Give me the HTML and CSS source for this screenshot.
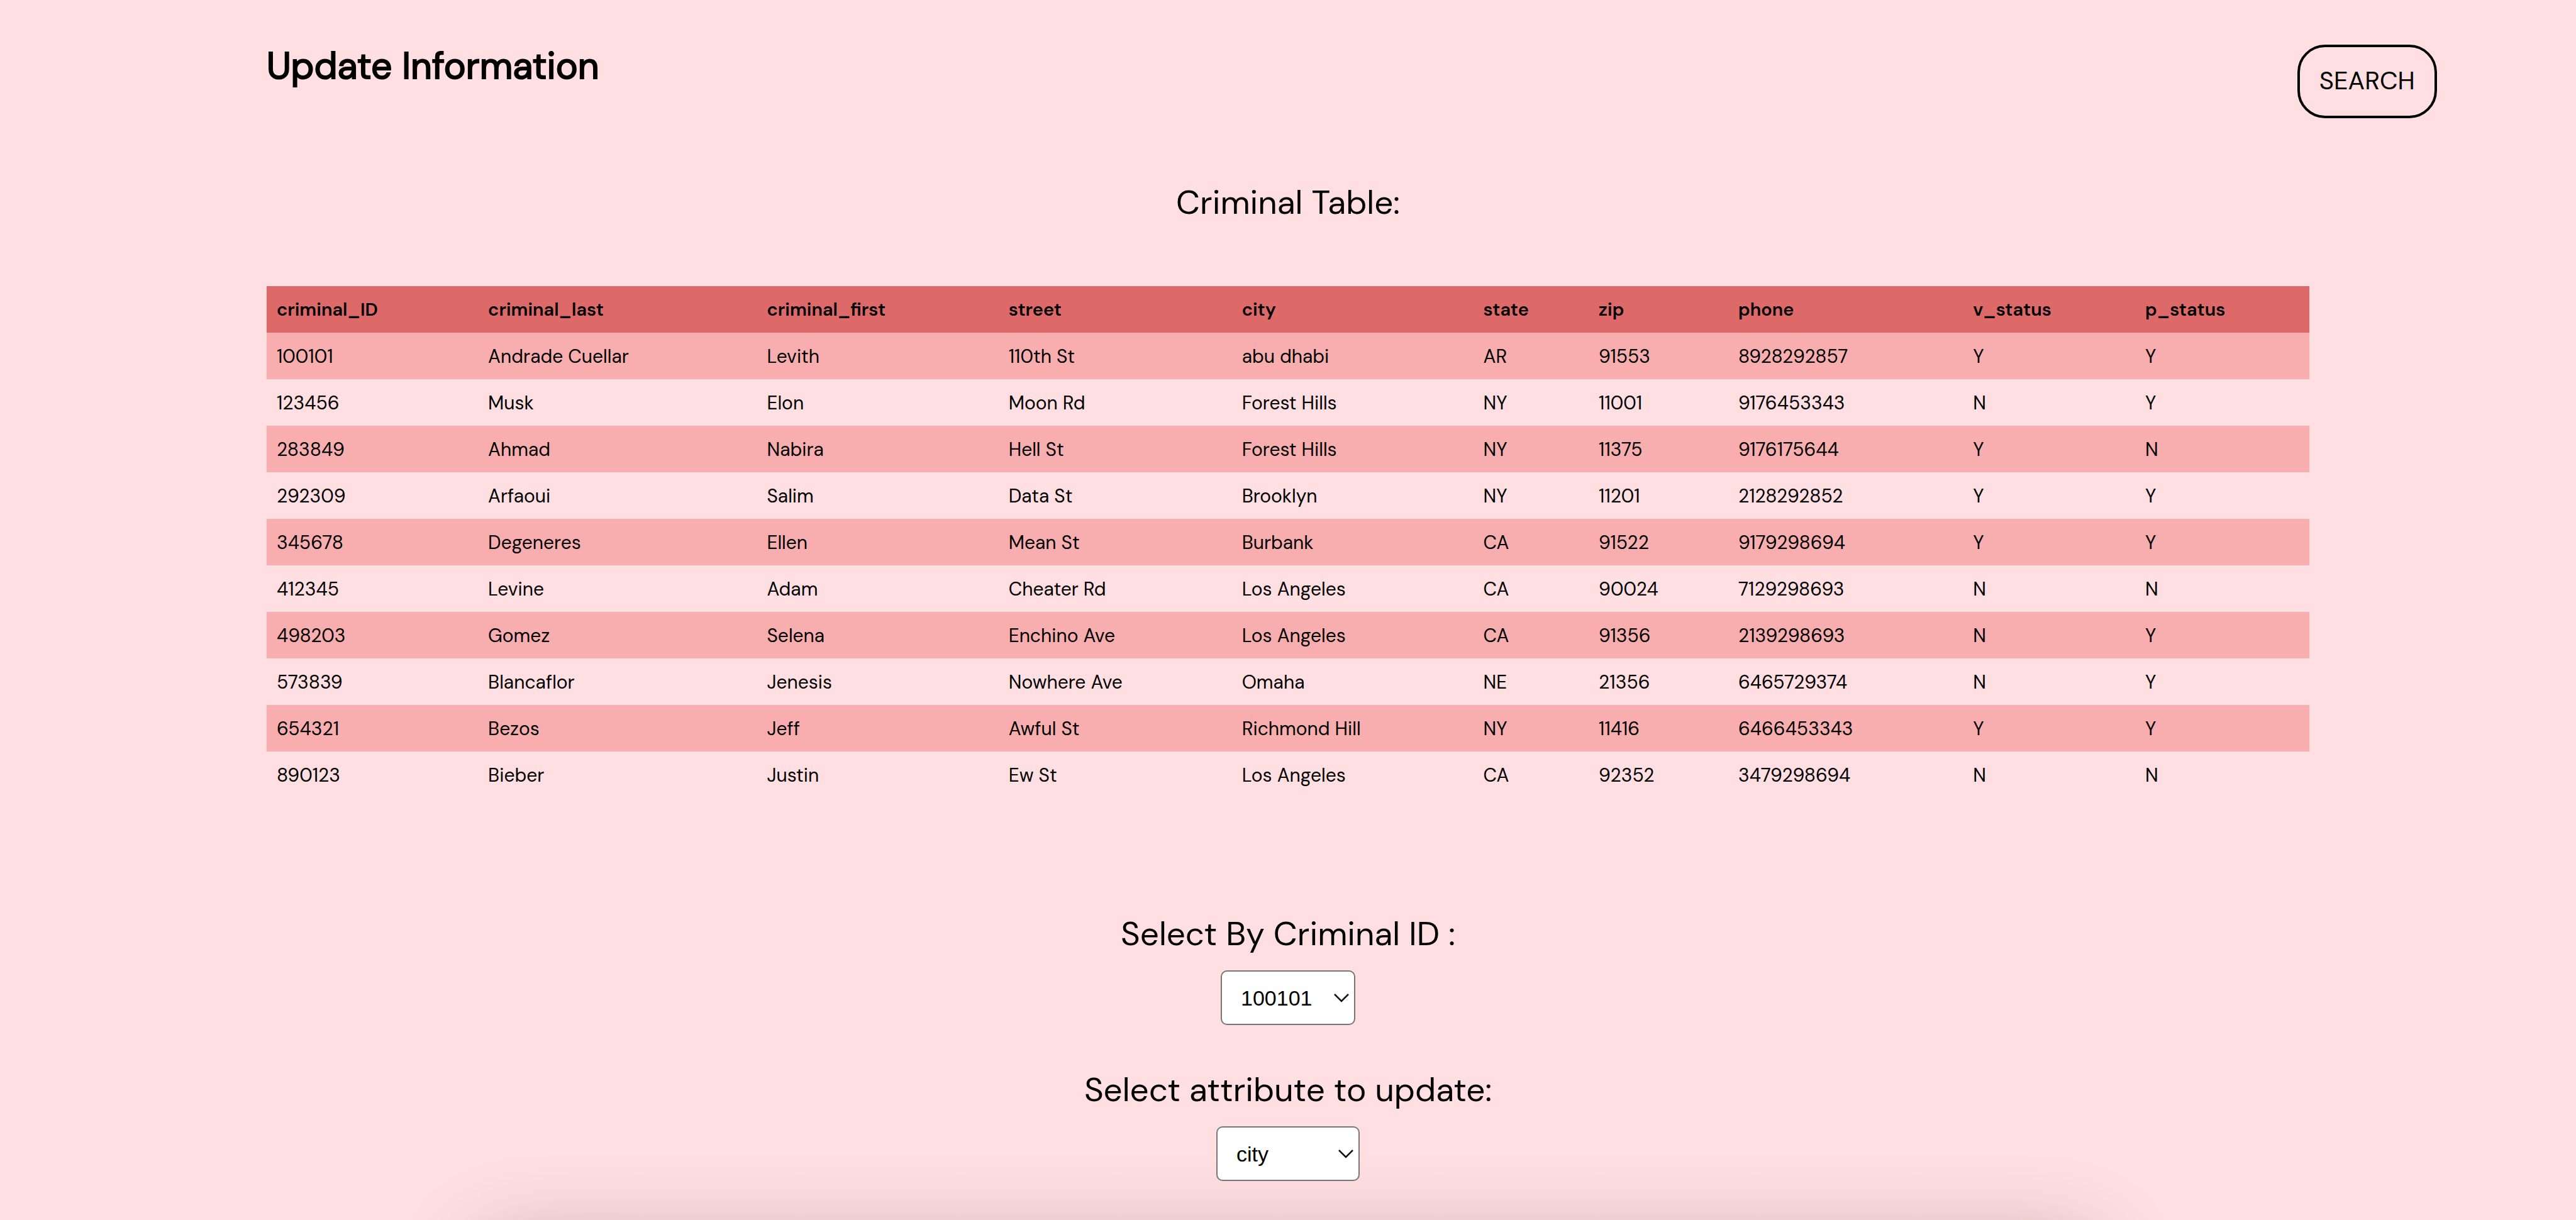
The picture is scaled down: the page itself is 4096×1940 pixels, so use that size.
FILE: index.html
```html
<!DOCTYPE html>
<html lang="en">
<head>
<meta charset="utf-8">
<meta name="viewport" content="width=device-width, initial-scale=1">
<title>Update Information</title>
<link rel="stylesheet" href="styles.css">
</head>
<body>
<header class="page-header">
  <h1 class="page-title">Update Information</h1>
  <button class="search-button" type="button">SEARCH</button>
</header>
<main class="content">
  <h2 class="section-title" id="table-title">Criminal Table:</h2>
  <table class="records" aria-labelledby="table-title">
    <colgroup>
      <col class="col-id"><col class="col-last"><col class="col-first"><col class="col-street"><col class="col-city"><col class="col-state"><col class="col-zip"><col class="col-phone"><col class="col-v"><col class="col-p">
    </colgroup>
    <thead>
      <tr><th>criminal_ID</th><th>criminal_last</th><th>criminal_first</th><th>street</th><th>city</th><th>state</th><th>zip</th><th>phone</th><th>v_status</th><th>p_status</th></tr>
    </thead>
    <tbody>
      <tr><td>100101</td><td>Andrade Cuellar</td><td>Levith</td><td>110th St</td><td>abu dhabi</td><td>AR</td><td>91553</td><td>8928292857</td><td>Y</td><td>Y</td></tr>
      <tr><td>123456</td><td>Musk</td><td>Elon</td><td>Moon Rd</td><td>Forest Hills</td><td>NY</td><td>11001</td><td>9176453343</td><td>N</td><td>Y</td></tr>
      <tr><td>283849</td><td>Ahmad</td><td>Nabira</td><td>Hell St</td><td>Forest Hills</td><td>NY</td><td>11375</td><td>9176175644</td><td>Y</td><td>N</td></tr>
      <tr><td>292309</td><td>Arfaoui</td><td>Salim</td><td>Data St</td><td>Brooklyn</td><td>NY</td><td>11201</td><td>2128292852</td><td>Y</td><td>Y</td></tr>
      <tr><td>345678</td><td>Degeneres</td><td>Ellen</td><td>Mean St</td><td>Burbank</td><td>CA</td><td>91522</td><td>9179298694</td><td>Y</td><td>Y</td></tr>
      <tr><td>412345</td><td>Levine</td><td>Adam</td><td>Cheater Rd</td><td>Los Angeles</td><td>CA</td><td>90024</td><td>7129298693</td><td>N</td><td>N</td></tr>
      <tr><td>498203</td><td>Gomez</td><td>Selena</td><td>Enchino Ave</td><td>Los Angeles</td><td>CA</td><td>91356</td><td>2139298693</td><td>N</td><td>Y</td></tr>
      <tr><td>573839</td><td>Blancaflor</td><td>Jenesis</td><td>Nowhere Ave</td><td>Omaha</td><td>NE</td><td>21356</td><td>6465729374</td><td>N</td><td>Y</td></tr>
      <tr><td>654321</td><td>Bezos</td><td>Jeff</td><td>Awful St</td><td>Richmond Hill</td><td>NY</td><td>11416</td><td>6466453343</td><td>Y</td><td>Y</td></tr>
      <tr><td>890123</td><td>Bieber</td><td>Justin</td><td>Ew St</td><td>Los Angeles</td><td>CA</td><td>92352</td><td>3479298694</td><td>N</td><td>N</td></tr>
    </tbody>
  </table>
  <form class="update-form">
    <div class="field">
      <label class="field-label" for="criminal-id">Select By Criminal ID :</label>
      <div class="select-box">
        <select class="select select-id" id="criminal-id">
          <option>100101</option><option>123456</option><option>283849</option><option>292309</option><option>345678</option><option>412345</option><option>498203</option><option>573839</option><option>654321</option><option>890123</option>
        </select>
        <svg class="chevron" viewBox="0 0 26 16" aria-hidden="true"><path d="M2 2 13 13 24 2"/></svg>
      </div>
    </div>
    <div class="field">
      <label class="field-label" for="attribute">Select attribute to update:</label>
      <div class="select-box">
        <select class="select select-attribute" id="attribute">
          <option>city</option><option>phone</option><option>state</option><option>street</option><option>v_status</option><option>p_status</option><option>zip</option>
        </select>
        <svg class="chevron" viewBox="0 0 26 16" aria-hidden="true"><path d="M2 2 13 13 24 2"/></svg>
      </div>
    </div>
  </form>
  <section class="panel"></section>
</main>
</body>
</html>
```
FILE: styles.css
```css
* {
  box-sizing: border-box;
}

html {
  scrollbar-width: none;
}

body {
  margin: 0;
  background: #ffdfe1;
  color: #000;
  font-family: "DM Sans", Inter, sans-serif;
}

.page-header {
  display: flex;
  justify-content: space-between;
  align-items: flex-start;
  padding: 71px 5.4% 0 10.35%;
}

.page-title {
  margin: 0;
  font-size: 59px;
  line-height: 68px;
  font-weight: 400;
  -webkit-text-stroke: 2px #000;
}

.search-button {
  width: 222px;
  height: 117px;
  padding: 0 0 4px;
  border: 4px solid #000;
  border-radius: 44px;
  background: transparent;
  color: #000;
  font-family: inherit;
  font-size: 40px;
}

.content {
  padding: 0 10.35%;
}

.section-title {
  margin: 102px 0 101px;
  text-align: center;
  font-size: 53px;
  line-height: 64px;
  font-weight: 400;
}

.records {
  width: 100%;
  table-layout: fixed;
  border-collapse: collapse;
  font-size: 30px;
}

.records th,
.records td {
  height: 74px;
  padding: 0 16px;
  text-align: left;
  white-space: nowrap;
}

.records th {
  background: #dd6969;
  font-size: 29px;
  font-weight: 600;
}

.records tbody tr:nth-child(odd) {
  background: #f8aeaf;
}

.col-id { width: 10.35%; }
.col-last { width: 13.65%; }
.col-first { width: 11.83%; }
.col-street { width: 11.42%; }
.col-city { width: 11.82%; }
.col-state { width: 5.65%; }
.col-zip { width: 6.83%; }
.col-phone { width: 11.49%; }
.col-v { width: 8.43%; }
.col-p { width: 8.53%; }

.update-form {
  display: flex;
  flex-direction: column;
  gap: 71px;
  margin-top: 184px;
}

.field {
  display: flex;
  flex-direction: column;
  align-items: center;
  gap: 26px;
}

.field-label {
  font-size: 53px;
  line-height: 64px;
}

.select-box {
  position: relative;
}

.select {
  display: block;
  height: 87px;
  padding: 0 30px;
  border: 2px solid #767676;
  border-radius: 10px;
  appearance: none;
  background: #fff;
  color: #000;
  font-family: "Liberation Sans", Arial, sans-serif;
  font-size: 34px;
}

.select-id {
  width: 214px;
}

.select-attribute {
  width: 228px;
}

.chevron {
  position: absolute;
  top: 36px;
  right: 9px;
  width: 26px;
  height: 16px;
  fill: none;
  stroke: #111;
  stroke-width: 2.5;
  pointer-events: none;
}

.panel {
  min-height: 400px;
  margin: 100px 10.5% 0;
  border-radius: 20px;
  background: #ffdfe1;
  box-shadow: 0 0 140px rgba(0, 0, 0, 0.24);
}
```
